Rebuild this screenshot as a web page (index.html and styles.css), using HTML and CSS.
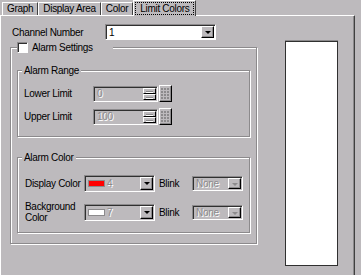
FILE: index.html
```html
<!DOCTYPE html>
<html lang="en">
<head>
    <meta charset="UTF-8">
    <title>Limit Colors</title>
    <link rel="stylesheet" href="styles.css">
</head>
<body>
    <div class="tabs">
        <div class="tab">Graph</div>
        <div class="tab">Display Area</div>
        <div class="tab">Color</div>
        <div class="tab active"><span class="focus">Limit Colors</span></div>
    </div>

    <div class="panel">
        <div class="settings">
            <div class="row channel">
                <label>Channel Number</label>
                <div class="combo wide"><span class="value">1</span><span class="drop"></span></div>
            </div>

            <fieldset class="group outer">
                <legend><span class="check"></span>Alarm Settings</legend>

                <fieldset class="group range">
                    <legend>Alarm Range</legend>
                    <div class="row">
                        <label>Lower Limit</label>
                        <div class="spin"><span class="value">0</span><span class="arrows"><i class="up"></i><i class="down"></i></span></div>
                        <span class="keypad">
                            <svg width="9" height="11" viewBox="0 0 9 11">
                                <g fill="#8c8a8c">
                                    <rect x="0" y="0" width="2" height="2"/><rect x="3" y="0" width="2" height="2"/><rect x="6" y="0" width="2" height="2"/>
                                    <rect x="0" y="3" width="2" height="2"/><rect x="3" y="3" width="2" height="2"/><rect x="6" y="3" width="2" height="2"/>
                                    <rect x="0" y="6" width="2" height="2"/><rect x="3" y="6" width="2" height="2"/><rect x="6" y="6" width="2" height="2"/>
                                    <rect x="0" y="9" width="2" height="2"/><rect x="3" y="9" width="2" height="2"/><rect x="6" y="9" width="2" height="2"/>
                                </g>
                            </svg>
                        </span>
                    </div>
                    <div class="row">
                        <label>Upper Limit</label>
                        <div class="spin"><span class="value">100</span><span class="arrows"><i class="up"></i><i class="down"></i></span></div>
                        <span class="keypad">
                            <svg width="9" height="11" viewBox="0 0 9 11">
                                <g fill="#8c8a8c">
                                    <rect x="0" y="0" width="2" height="2"/><rect x="3" y="0" width="2" height="2"/><rect x="6" y="0" width="2" height="2"/>
                                    <rect x="0" y="3" width="2" height="2"/><rect x="3" y="3" width="2" height="2"/><rect x="6" y="3" width="2" height="2"/>
                                    <rect x="0" y="6" width="2" height="2"/><rect x="3" y="6" width="2" height="2"/><rect x="6" y="6" width="2" height="2"/>
                                    <rect x="0" y="9" width="2" height="2"/><rect x="3" y="9" width="2" height="2"/><rect x="6" y="9" width="2" height="2"/>
                                </g>
                            </svg>
                        </span>
                    </div>
                </fieldset>

                <fieldset class="group colors">
                    <legend>Alarm Color</legend>
                    <div class="row">
                        <label>Display Color</label>
                        <div class="combo color disabled"><span class="swatch red"></span><span class="value">4</span><span class="drop"></span></div>
                        <span class="blink">Blink</span>
                        <div class="combo small disabled"><span class="value">None</span><span class="drop off"></span></div>
                    </div>
                    <div class="row second">
                        <label>Background<br>Color</label>
                        <div class="combo color disabled"><span class="swatch white"></span><span class="value">7</span><span class="drop"></span></div>
                        <span class="blink">Blink</span>
                        <div class="combo small disabled"><span class="value">None</span><span class="drop off"></span></div>
                    </div>
                </fieldset>
            </fieldset>
        </div>

        <div class="preview"></div>
    </div>
</body>
</html>
```

FILE: styles.css
```css
* {
    box-sizing: border-box;
}
body {
    margin: 0;
    background-color: #bdbabd;
    color: #000;
    font-family: "Liberation Sans", Arial, sans-serif;
    font-size: 10px;
    letter-spacing: -0.3px;
    overflow: hidden;
}
label {
    white-space: nowrap;
}
.tabs {
    display: flex;
    align-items: flex-end;
    height: 15px;
    padding-left: 2px;
}
.tab {
    height: 13px;
    line-height: 12px;
    padding: 0 4px;
    border-top: 1px solid #fff;
    border-left: 1px solid #fff;
    border-right: 1px solid #404040;
    white-space: nowrap;
}
.tab.active {
    position: relative;
    z-index: 1;
    height: 16px;
    margin-bottom: -1px;
    padding: 2px 2px 0;
    background-color: #bdbabd;
}
.focus {
    display: block;
    padding: 0 4px;
    line-height: 11px;
    outline: 1px dotted #000;
}
.panel {
    display: flex;
    width: 355px;
    height: 262px;
    padding: 8px 0 0 9px;
    border-top: 1px solid #fff;
    border-left: 1px solid #fff;
    border-right: 1px solid #404040;
    box-shadow: inset -1px 0 #8c8a8c;
}
.settings {
    width: 247px;
}
.row {
    display: flex;
    align-items: center;
}
.channel label {
    width: 95px;
    padding-left: 2px;
}
.combo {
    display: flex;
    align-items: center;
    height: 16px;
    padding: 1px 1px 1px 1px;
    background-color: #fff;
    border-top: 1px solid #8c8a8c;
    border-left: 1px solid #8c8a8c;
    border-bottom: 1px solid #fff;
    border-right: 1px solid #fff;
    box-shadow: inset 1px 1px #303030;
}
.combo.wide {
    width: 111px;
}
.combo .value {
    flex: 1;
    padding-left: 2px;
    white-space: nowrap;
}
.combo.disabled {
    background-color: #bdbabd;
}
.combo.disabled .value,
.spin .value {
    color: #8c8a8c;
    text-shadow: 1px 1px #fff;
}
.drop {
    position: relative;
    width: 13px;
    height: 100%;
    background-color: #bdbabd;
    border-top: 1px solid #fff;
    border-left: 1px solid #fff;
    border-right: 1px solid #000;
    border-bottom: 1px solid #000;
    box-shadow: inset -1px -1px #8c8a8c;
}
.drop::after {
    content: "";
    position: absolute;
    left: 3px;
    top: 4px;
    border-top: 3px solid #000;
    border-left: 3px solid transparent;
    border-right: 3px solid transparent;
}
.drop.off::after {
    border-top-color: #8c8a8c;
}
.group {
    margin: 0;
    min-width: 0;
    padding: 0 6px 10px;
    border: 1px solid #8c8a8c;
    box-shadow: inset 1px 1px #fff, 1px 1px #fff;
}
.group legend {
    padding: 0 2px;
    margin-left: -2px;
    line-height: 13px;
    background-color: #bdbabd;
}
.outer {
    width: 247px;
    margin-top: 1px;
}
.outer > legend {
    display: flex;
    align-items: center;
    gap: 4px;
    height: 13px;
    margin-left: 0;
    padding: 0 20px 0 0;
}
.check {
    width: 11px;
    height: 11px;
    background-color: #fff;
    border-top: 1px solid #8c8a8c;
    border-left: 1px solid #8c8a8c;
    border-bottom: 1px solid #fff;
    border-right: 1px solid #fff;
    box-shadow: inset 1px 1px #303030;
}
.range {
    margin-top: 10px;
    padding-bottom: 11px;
}
.range .row {
    height: 17px;
    margin-top: 6px;
}
.range legend + .row {
    margin-top: 8px;
}
.range label {
    width: 69px;
}
.spin {
    display: flex;
    align-items: stretch;
    width: 65px;
    height: 16px;
    padding: 1px 1px 1px 1px;
    border-top: 1px solid #8c8a8c;
    border-left: 1px solid #8c8a8c;
    border-bottom: 1px solid #fff;
    border-right: 1px solid #fff;
    box-shadow: inset 1px 1px #303030;
}
.spin .value {
    flex: 1;
    padding-left: 2px;
    line-height: 12px;
}
.arrows {
    display: flex;
    flex-direction: column;
    width: 13px;
}
.arrows i {
    position: relative;
    flex: 1;
    border-top: 1px solid #fff;
    border-left: 1px solid #fff;
    border-right: 1px solid #000;
    border-bottom: 1px solid #000;
}
.arrows i::after {
    content: "";
    position: absolute;
    left: 2px;
    right: 2px;
    top: 2px;
    height: 1px;
    background-color: #8c8a8c;
    box-shadow: 0 1px #fff;
}
.keypad {
    display: flex;
    align-items: center;
    justify-content: center;
    width: 13px;
    height: 17px;
    margin-left: 1px;
    border-top: 1px solid #fff;
    border-left: 1px solid #fff;
    border-right: 1px solid #000;
    border-bottom: 1px solid #000;
    box-shadow: inset -1px -1px #8c8a8c;
}
.colors {
    margin-top: 14px;
    padding-bottom: 9px;
}
.colors legend + .row {
    margin-top: 11px;
}
.colors .row.second {
    margin-top: 9px;
}
.colors label {
    width: 60px;
    padding-left: 1px;
    line-height: 11px;
}
.combo.color {
    width: 71px;
    height: 17px;
}
.swatch {
    width: 17px;
    height: 7px;
    margin-left: 2px;
    border: 1px solid #8c8a8c;
}
.swatch.red {
    background-color: #ff0000;
}
.swatch.white {
    background-color: #fff;
}
.blink {
    width: 33px;
    margin-left: 4px;
}
.combo.small {
    width: 51px;
    height: 15px;
}
.preview {
    width: 53px;
    height: 225px;
    margin-top: 17px;
    margin-left: 28px;
    background-color: #fff;
    border: 1px solid #303030;
    box-shadow: 0 -1px #8c8a8c;
}
```
